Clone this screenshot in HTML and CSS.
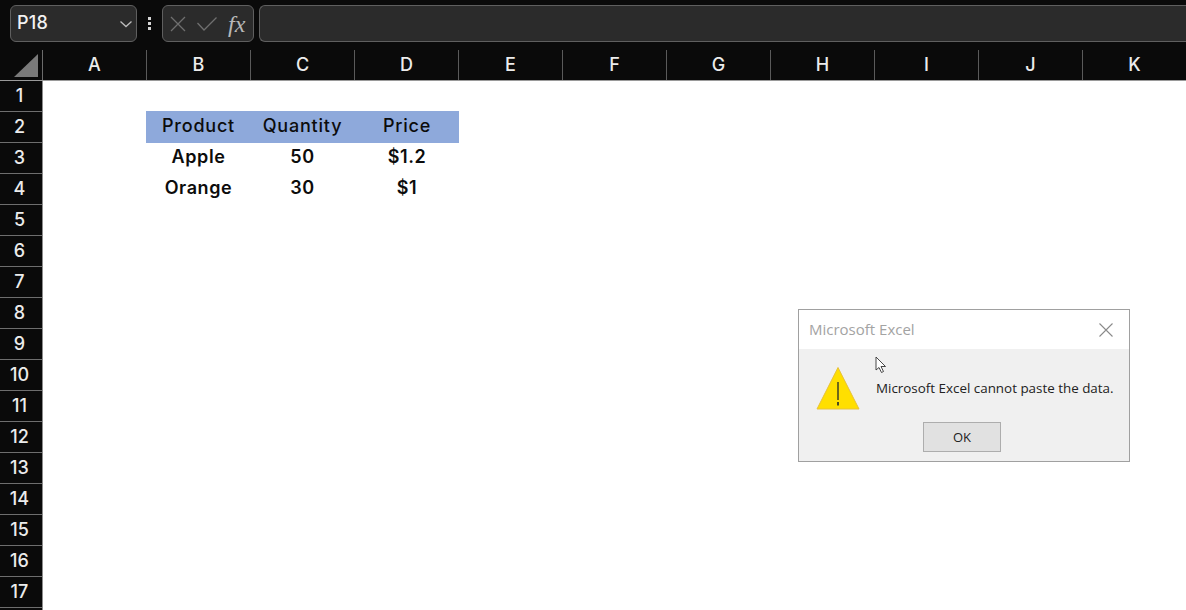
FILE: index.html
```html
<!DOCTYPE html>
<html lang="en">
<head>
<meta charset="utf-8">
<title>Microsoft Excel</title>
<link rel="stylesheet" href="styles.css">
</head>
<body>
<div class="app">
  <div class="formula-bar">
    <div class="name-box"><span>P18</span>
      <svg class="chev" width="14" height="8" viewBox="0 0 14 8"><path d="M1.5 1.5 L7 6.5 L12.5 1.5" fill="none" stroke="#bdbdbd" stroke-width="1.3"/></svg>
    </div>
    <div class="dots"><i></i><i></i><i></i></div>
    <div class="fx-box">
      <svg width="18" height="18" viewBox="0 0 18 18"><path d="M2 2 L16 16 M16 2 L2 16" fill="none" stroke="#6f6f6f" stroke-width="1.3"/></svg>
      <svg width="22" height="16" viewBox="0 0 22 16"><path d="M1.5 7 L8 14 L20.5 1.5" fill="none" stroke="#6f6f6f" stroke-width="1.3"/></svg>
      <span class="fx">fx</span>
    </div>
    <div class="formula-input"></div>
  </div>
  <div class="col-headers">
    <div class="corner"><svg width="24" height="23" viewBox="0 0 24 23"><path d="M24 0 V23 H0 Z" fill="#7a7a7a"/></svg></div>
    <div class="col">A</div><div class="col">B</div><div class="col">C</div><div class="col">D</div><div class="col">E</div><div class="col">F</div><div class="col">G</div><div class="col">H</div><div class="col">I</div><div class="col">J</div><div class="col">K</div>
  </div>
  <div class="sheet">
    <div class="row-headers">
      <div class="row">1</div><div class="row">2</div><div class="row">3</div><div class="row">4</div><div class="row">5</div><div class="row">6</div><div class="row">7</div><div class="row">8</div><div class="row">9</div><div class="row">10</div><div class="row">11</div><div class="row">12</div><div class="row">13</div><div class="row">14</div><div class="row">15</div><div class="row">16</div><div class="row">17</div>
    </div>
    <div class="cells">
      <div class="table">
        <div class="cell head">Product</div><div class="cell head">Quantity</div><div class="cell head">Price</div>
        <div class="cell">Apple</div><div class="cell">50</div><div class="cell">$1.2</div>
        <div class="cell">Orange</div><div class="cell">30</div><div class="cell">$1</div>
      </div>
    </div>
  </div>
  <div class="dialog">
    <div class="dialog-title">
      <span>Microsoft Excel</span>
      <svg width="14" height="14" viewBox="0 0 14 14"><path d="M0.5 0.5 L13.5 13.5 M13.5 0.5 L0.5 13.5" fill="none" stroke="#8a8a8a" stroke-width="1.1"/></svg>
    </div>
    <div class="dialog-body">
      <div class="dialog-msg">
        <svg width="44" height="44" viewBox="0 0 44 44"><path d="M22 1.5 L43 43 H1 Z" fill="#ffdf00" stroke="#e8c23a" stroke-width="1"/><path d="M22 16 V34" stroke="#4a4a20" stroke-width="1.6"/><path d="M22 36 V39.5" stroke="#4a4a20" stroke-width="2"/></svg>
        <p>Microsoft Excel cannot paste the data.</p>
      </div>
      <div class="dialog-actions"><div class="ok">OK</div></div>
    </div>
    <svg class="cursor" width="12" height="18" viewBox="0 0 12 18"><path d="M1 1 V14 L4 11.5 L6.5 16.5 L8.5 15.5 L6 10.5 L10.5 10.5 Z" fill="#fff" stroke="#333" stroke-width="0.9"/></svg>
  </div>
</div>
</body>
</html>
```
FILE: styles.css
```css
* { box-sizing: border-box; }
html, body { margin: 0; height: 100%; }
body { background: #fff; overflow: hidden; font-family: Inter, "Noto Sans", sans-serif; }
.app { position: relative; width: 1186px; height: 610px; overflow: hidden; }

.formula-bar { height: 50px; background: #0a0a0a; display: flex; align-items: flex-start; padding: 5px 0 0 10px; }
.name-box { width: 127px; height: 37px; background: #2b2b2b; border: 1px solid #5f5f5f; border-radius: 6px; display: flex; align-items: center; justify-content: space-between; padding: 0 3px 0 6px; color: #f2f2f2; font-size: 18px; font-weight: 500; letter-spacing: 0.2px; }
.name-box span { position: relative; bottom: 1px; }
.dots { width: 25px; height: 37px; display: flex; flex-direction: column; align-items: center; justify-content: center; gap: 2px; }
.dots i { width: 3px; height: 3px; background: #d5d5d5; display: block; }
.fx-box { width: 92px; height: 37px; background: #2b2b2b; border: 1px solid #5f5f5f; border-radius: 6px; display: flex; align-items: center; gap: 9px; padding: 0 6px 0 6px; }
.fx { font-family: "Liberation Serif", serif; font-style: italic; font-size: 24px; color: #b8b8b8; line-height: 1; margin-left: 1px; }
.formula-input { flex: 1; height: 37px; margin-left: 5px; background: #2b2b2b; border: 1px solid #5f5f5f; border-right: 0; border-radius: 6px 0 0 6px; }

.col-headers { height: 31px; background: #0a0a0a; display: flex; border-bottom: 1px solid #9a9a9a; }
.corner { width: 43px; display: flex; justify-content: flex-end; align-items: flex-end; padding: 0 4px 3px 0; border-right: 1px solid #6b6b6b; flex: none; }
.col { width: 104px; flex: none; display: flex; align-items: center; justify-content: center; color: #ececec; font-size: 18px; font-weight: 500; border-right: 1px solid #5a5a5a; padding-bottom: 1px; }

.sheet { display: flex; height: 529px; }
.row-headers { width: 43px; flex: none; background: #0a0a0a; border-right: 1px solid #8c8c8c; }
.row { height: 31px; display: flex; align-items: center; justify-content: center; color: #ececec; font-size: 18px; font-weight: 500; border-bottom: 1px solid #6e6e6e; padding: 0 3px 1px 0; }

.cells { flex: 1; padding: 30px 0 0 103px; background: #fff; }
.table { display: grid; grid-template-columns: 104px 104px 105px; grid-auto-rows: 31px; width: 313px; }
.cell { display: flex; align-items: center; justify-content: center; font-size: 18px; font-weight: 600; color: #0c0c0c; letter-spacing: 0.6px; padding: 0 0 2px 1px; }
.head { background: #8ea9db; height: 32px; font-weight: 500; letter-spacing: 0.8px; padding-bottom: 3px; }

.dialog { position: absolute; left: 798px; top: 309px; width: 332px; height: 153px; border: 1px solid #a0a0a0; background: #f0f0f0; font-family: "Open Sans", "Noto Sans", sans-serif; }
.dialog-title { height: 39px; background: #fff; display: flex; align-items: center; justify-content: space-between; padding: 0 16px 2px 10px; color: #a3a3a3; font-size: 15px; }
.dialog-title svg { position: relative; top: 1px; }
.dialog-body { padding-top: 17px; }
.dialog-msg { display: flex; align-items: center; gap: 16px; padding-left: 17px; }
.dialog-msg p { margin: 0; color: #222; font-size: 13.4px; white-space: nowrap; }
.dialog-actions { display: flex; justify-content: center; padding: 11px 0 0 0; margin-top: 1px; }
.ok { width: 78px; height: 30px; margin-left: -4px; background: #e1e1e1; border: 1px solid #adadad; display: flex; align-items: center; justify-content: center; font-size: 13px; color: #222; }
.cursor { position: absolute; left: 76px; top: 46px; }
```
